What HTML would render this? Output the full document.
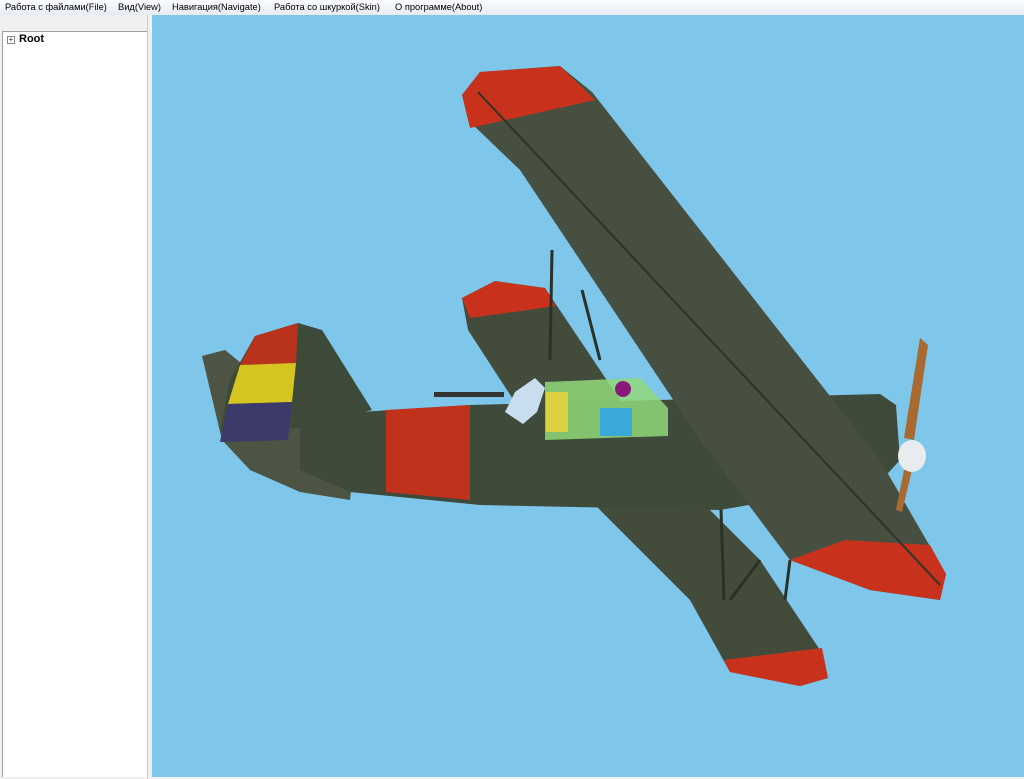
<!DOCTYPE html>
<html><head><meta charset="utf-8"><style>
html,body{margin:0;padding:0;width:1024px;height:779px;overflow:hidden;background:#f0f0f0;font-family:"Liberation Sans",sans-serif}
#menu{position:absolute;left:0;top:0;width:1024px;height:15px;background:linear-gradient(#fbfcfe,#e6ebf3);font-size:9.3px;line-height:15px;color:#000;white-space:nowrap}
#menu span{position:absolute;top:0}
#tree{position:absolute;left:2px;top:31px;width:144px;height:745px;background:#fff;border-top:1px solid #a0a0a0;border-left:1px solid #a0a0a0}
#split{position:absolute;left:147px;top:15px;width:4px;height:764px;background:#f0f0f0;border-left:1px solid #c8c8c8}
#view{position:absolute;left:152px;top:15px;width:872px;height:762px;background:#7ec6ea}
.pl{position:absolute;left:4px;top:4px;width:6px;height:6px;border:1px solid #888;font-size:8px;line-height:6px;text-align:center;color:#333}
</style></head><body>
<div id="menu"><span style="left:5px">Работа с файлами(File)</span><span style="left:118px">Вид(View)</span><span style="left:172px">Навигация(Navigate)</span><span style="left:274px">Работа со шкуркой(Skin)</span><span style="left:395px">О программе(About)</span></div>
<div id="tree"><div class="pl">+</div><div style="position:absolute;left:16px;top:1px;font-size:11px;font-weight:bold">Root</div></div>
<div id="split"></div>
<div id="view"></div>
<svg style="position:absolute;left:0;top:0" width="1024" height="779">
<!-- lower wing -->
<polygon points="462,298 495,281 545,288 600,370 660,460 760,560 820,650 828,678 800,686 730,672 690,600 600,510 520,410 468,330" fill="#434c3b"/>
<polygon points="462,298 495,281 545,288 556,306 470,318" fill="#c8321c"/>
<polygon points="724,660 822,648 828,678 800,686 730,672" fill="#c8321c"/>
<!-- struts -->
<g stroke="#2a3228" stroke-width="3"><line x1="552" y1="250" x2="550" y2="360"/><line x1="582" y1="290" x2="600" y2="360"/><line x1="720" y1="480" x2="724" y2="600"/><line x1="760" y1="560" x2="730" y2="600"/><line x1="790" y1="560" x2="785" y2="600"/></g>
<!-- tail stab -->
<polygon points="202,356 225,350 262,380 360,420 350,500 300,492 250,470 222,440" fill="#4e5444"/>
<!-- fin -->
<polygon points="255,336 298,323 322,330 372,410 300,428 220,432 230,380" fill="#3d4a3a"/>
<polygon points="255,336 298,323 296,363 240,365" fill="#b8321c"/>
<polygon points="240,365 296,363 292,402 228,404" fill="#d6c420"/>
<polygon points="228,404 292,402 288,440 220,442" fill="#3c3a6a"/>
<!-- fuselage -->
<polygon points="300,425 360,412 470,405 880,394 896,405 900,460 880,482 720,510 480,505 350,492 300,470" fill="#3e4a3a"/>
<polygon points="386,410 470,405 470,500 386,492" fill="#c0321c"/>
<!-- canopy -->
<polygon points="545,382 640,378 668,408 668,436 545,440" fill="#8fd87a" opacity=".85"/>
<rect x="546" y="392" width="22" height="40" fill="#dccf40"/>
<rect x="600" y="408" width="32" height="28" fill="#3aa8d8"/>
<circle cx="623" cy="389" r="8" fill="#8a1a7a"/>
<path d="M505,412 l10,-20 20,-14 10,10 -8,24 -14,12z" fill="#c8ddee"/>
<rect x="434" y="392" width="70" height="5" fill="#333"/>
<!-- upper wing -->
<polygon points="462,95 480,72 560,66 592,92 880,460 946,574 940,600 870,590 790,560 700,440 520,170 470,122" fill="#464f40"/>
<polygon points="462,95 480,72 560,66 595,100 470,128" fill="#c8321c"/>
<polygon points="790,560 845,540 930,545 946,574 940,600 870,590" fill="#c8321c"/>
<line x1="478" y1="92" x2="940" y2="585" stroke="#2c3428" stroke-width="2"/>
<!-- nose/prop -->
<polygon points="920,338 928,345 914,440 904,438" fill="#a86a30"/>
<polygon points="904,470 912,470 902,512 896,510" fill="#a86a30"/>
<ellipse cx="912" cy="456" rx="14" ry="16" fill="#e8ecef"/>
</svg>
</body></html>
